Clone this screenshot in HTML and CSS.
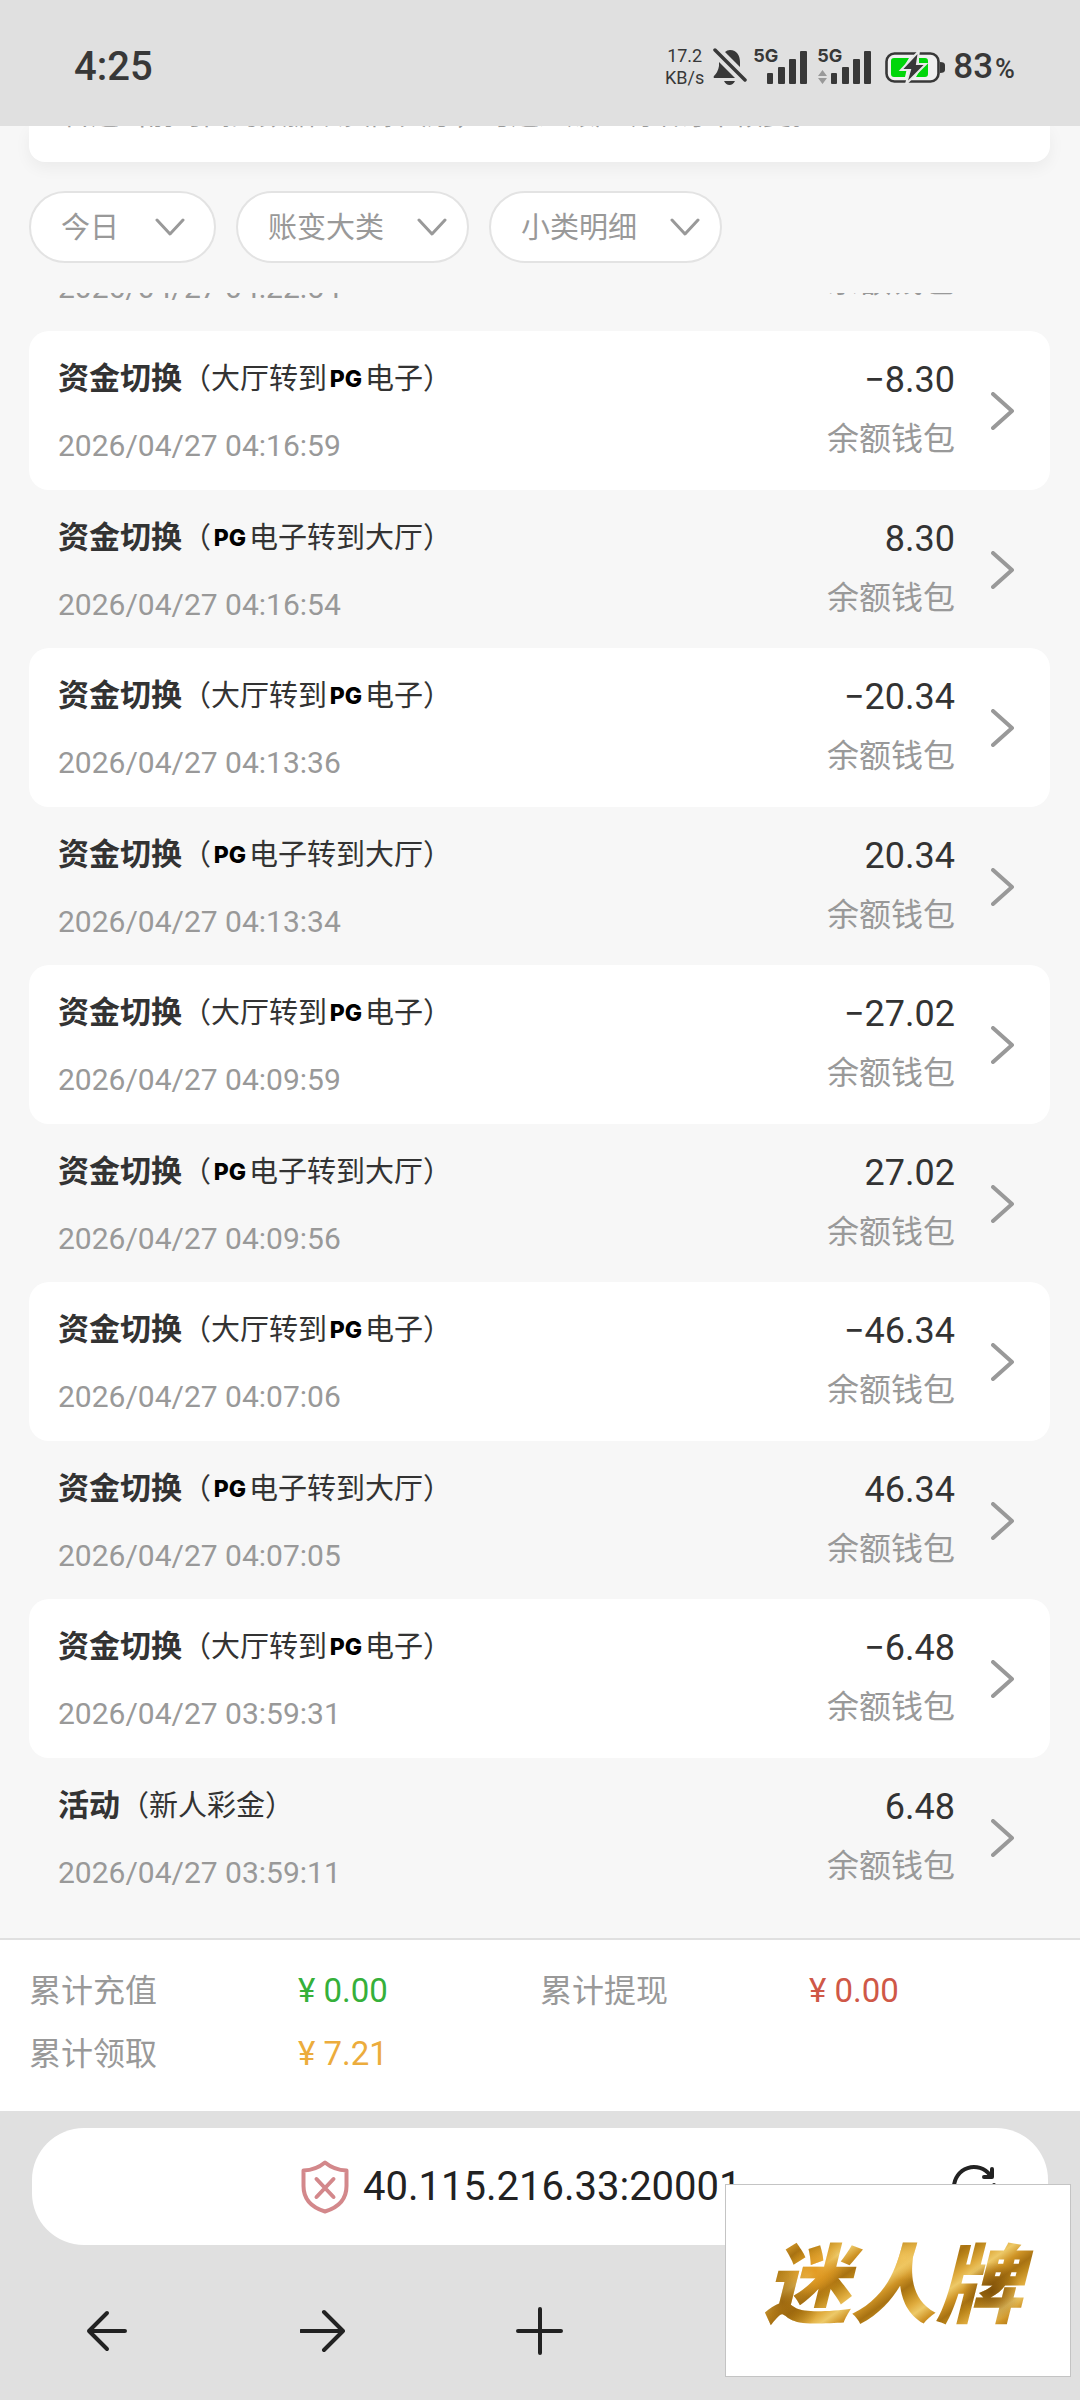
FILE: index.html
```html
<!DOCTYPE html>
<html lang="zh-CN">
<head>
<meta charset="utf-8">
<meta name="viewport" content="width=device-width, initial-scale=1">
<title>资金明细</title>
<link rel="stylesheet" href="styles.css">
</head>
<body>
<svg width="0" height="0" class="sprite" aria-hidden="true">
  <symbol id="chev-right" viewBox="0 0 24 38"><path d="M2 2L21 19L2 36" fill="none" stroke="currentColor" stroke-width="4" stroke-linecap="round" stroke-linejoin="round"/></symbol>
  <symbol id="chev-down" viewBox="0 0 30 20"><path d="M2 2L15 16L28 2" fill="none" stroke="currentColor" stroke-width="3" stroke-linecap="round" stroke-linejoin="round"/></symbol>
  <symbol id="bars" viewBox="0 0 54 36"><g fill="currentColor"><rect x="14" y="24" width="6" height="11" rx="1"/><rect x="25" y="18" width="7" height="17" rx="1"/><rect x="36" y="10" width="7" height="25" rx="1"/><rect x="47" y="2" width="7" height="33" rx="1"/></g></symbol>
</svg>
<div class="app">
  <header class="status">
    <time class="clock">4:25</time>
    <div class="indicators">
      <div class="net"><span>17.2</span><span>KB/s</span></div>
      <svg class="bell" viewBox="0 0 34 38" aria-hidden="true">
        <path d="M17 2C24 2 27 8 27 14V19L12 4Q14 2 17 2Z M6 14L22 30H1Q0 29 1 28Q5 24 6 18Z M11 33H22Q20 37 16.500 37Q13 37 11 33Z" fill="currentColor"/>
        <path d="M2 2L32 32" stroke="currentColor" stroke-width="3.500" stroke-linecap="round"/>
      </svg>
      <div class="signal"><span class="gen">5G</span><svg viewBox="0 0 54 36" aria-hidden="true"><use href="#bars"/></svg></div>
      <div class="signal"><span class="gen">5G</span><svg viewBox="0 0 54 36" aria-hidden="true"><use href="#bars"/><path d="M5.500 21L10 27H1Z M1 29H10L5.500 35Z" fill="#999"/></svg></div>
      <svg class="battery" viewBox="0 0 60 34" aria-hidden="true">
        <rect x="1.500" y="3.500" width="52" height="28" rx="8" fill="#f0f0f0" stroke="currentColor" stroke-width="2.600"/>
        <path d="M9 8H24L18 18H22L20 27H9Q6 27 6 24V11Q6 8 9 8Z M34 8H40Q43 8 43 11V24Q43 27 40 27H31L38 15H34Z" fill="#00d60a"/>
        <path d="M34 1L16 20H25L21 34L41 14H32Z" fill="currentColor" stroke="#e8e8e8" stroke-width="2"/>
        <path d="M55 12Q60 12 60 15V20Q60 23 55 23Z" fill="currentColor"/>
      </svg>
      <div class="level">83<span class="percent">%</span></div>
    </div>
  </header>

  <main class="page">
    <section class="notice"><p>普通当前时间的数据以实际大厅，可通过账户明细订单恢复。</p></section>

    <div class="filters">
      <button class="filter" type="button">今日<svg aria-hidden="true"><use href="#chev-down"/></svg></button>
      <button class="filter filter-wide" type="button">账变大类<svg aria-hidden="true"><use href="#chev-down"/></svg></button>
      <button class="filter filter-wide" type="button">小类明细<svg aria-hidden="true"><use href="#chev-down"/></svg></button>
    </div>

    <ul class="records">
      <li class="record"><div class="info"><time>2026/04/27 04:22:54</time></div><div class="sum"><span class="wallet">余额钱包</span></div><svg class="go" aria-hidden="true"></svg></li>
      <li class="record"><div class="info"><h2>资金切换<small>（大厅转到<b class="pg">PG</b>电子）</small></h2><time>2026/04/27 04:16:59</time></div><div class="sum"><span class="amount">−8.30</span><span class="wallet">余额钱包</span></div><svg class="go" aria-hidden="true"><use href="#chev-right"/></svg></li>
      <li class="record"><div class="info"><h2>资金切换<small>（<b class="pg">PG</b>电子转到大厅）</small></h2><time>2026/04/27 04:16:54</time></div><div class="sum"><span class="amount">8.30</span><span class="wallet">余额钱包</span></div><svg class="go" aria-hidden="true"><use href="#chev-right"/></svg></li>
      <li class="record"><div class="info"><h2>资金切换<small>（大厅转到<b class="pg">PG</b>电子）</small></h2><time>2026/04/27 04:13:36</time></div><div class="sum"><span class="amount">−20.34</span><span class="wallet">余额钱包</span></div><svg class="go" aria-hidden="true"><use href="#chev-right"/></svg></li>
      <li class="record"><div class="info"><h2>资金切换<small>（<b class="pg">PG</b>电子转到大厅）</small></h2><time>2026/04/27 04:13:34</time></div><div class="sum"><span class="amount">20.34</span><span class="wallet">余额钱包</span></div><svg class="go" aria-hidden="true"><use href="#chev-right"/></svg></li>
      <li class="record"><div class="info"><h2>资金切换<small>（大厅转到<b class="pg">PG</b>电子）</small></h2><time>2026/04/27 04:09:59</time></div><div class="sum"><span class="amount">−27.02</span><span class="wallet">余额钱包</span></div><svg class="go" aria-hidden="true"><use href="#chev-right"/></svg></li>
      <li class="record"><div class="info"><h2>资金切换<small>（<b class="pg">PG</b>电子转到大厅）</small></h2><time>2026/04/27 04:09:56</time></div><div class="sum"><span class="amount">27.02</span><span class="wallet">余额钱包</span></div><svg class="go" aria-hidden="true"><use href="#chev-right"/></svg></li>
      <li class="record"><div class="info"><h2>资金切换<small>（大厅转到<b class="pg">PG</b>电子）</small></h2><time>2026/04/27 04:07:06</time></div><div class="sum"><span class="amount">−46.34</span><span class="wallet">余额钱包</span></div><svg class="go" aria-hidden="true"><use href="#chev-right"/></svg></li>
      <li class="record"><div class="info"><h2>资金切换<small>（<b class="pg">PG</b>电子转到大厅）</small></h2><time>2026/04/27 04:07:05</time></div><div class="sum"><span class="amount">46.34</span><span class="wallet">余额钱包</span></div><svg class="go" aria-hidden="true"><use href="#chev-right"/></svg></li>
      <li class="record"><div class="info"><h2>资金切换<small>（大厅转到<b class="pg">PG</b>电子）</small></h2><time>2026/04/27 03:59:31</time></div><div class="sum"><span class="amount">−6.48</span><span class="wallet">余额钱包</span></div><svg class="go" aria-hidden="true"><use href="#chev-right"/></svg></li>
      <li class="record"><div class="info"><h2>活动<small>（新人彩金）</small></h2><time>2026/04/27 03:59:11</time></div><div class="sum"><span class="amount">6.48</span><span class="wallet">余额钱包</span></div><svg class="go" aria-hidden="true"><use href="#chev-right"/></svg></li>
    </ul>

    <dl class="totals">
      <div class="total"><dt>累计充值</dt><dd class="green">¥ 0.00</dd></div>
      <div class="total"><dt>累计提现</dt><dd class="red">¥ 0.00</dd></div>
      <div class="total"><dt>累计领取</dt><dd class="orange">¥ 7.21</dd></div>
    </dl>
  </main>

  <footer class="browser">
    <div class="address">
      <svg class="shield" viewBox="0 0 48 54" fill="none" stroke="#d3888b" stroke-width="4" stroke-linejoin="round" stroke-linecap="round" aria-hidden="true"><path d="M24 2.500Q33 10 45.500 10.500V26Q45.500 45 24 51.500Q2.500 45 2.500 26V10.500Q15 10 24 2.500Z"/><path d="M15.500 19L32.500 37M32.500 19L15.500 37"/></svg>
      <a class="url" href="#">40.115.216.33:20001</a>
      <button class="reload" type="button" aria-label="刷新"><svg viewBox="0 0 48 48" fill="none" stroke="currentColor" stroke-width="4" stroke-linecap="round" stroke-linejoin="round" aria-hidden="true"><path d="M4 24A20 20 0 0 1 40 12M42 6V14H34M44 22A20 20 0 0 1 8 36"/></svg></button>
    </div>
    <nav class="nav">
      <button type="button" aria-label="后退"><svg viewBox="0 0 48 48"><path d="M41 24H5M23 6L5 24L23 42"/></svg></button>
      <button type="button" aria-label="前进"><svg viewBox="0 0 48 48"><path d="M1 24H43M24 5L43 24L24 43"/></svg></button>
      <button type="button" aria-label="新建"><svg viewBox="0 0 48 48"><path d="M2 24H45M24 2V46"/></svg></button>
    </nav>
    <aside class="floating"><span>迷人牌</span></aside>
  </footer>
</div>
</body>
</html>
```
FILE: styles.css
```css
* { box-sizing: border-box; margin: 0; padding: 0; }

body {
  font-family: Roboto, "Noto Sans CJK SC", sans-serif;
  color: #333;
  background: #f7f7f7;
}

button {
  font: inherit;
  color: inherit;
  border: 0;
  background: none;
}

a { color: inherit; text-decoration: none; }

.sprite { position: absolute; }

.app {
  display: flex;
  flex-direction: column;
  height: 100vh;
}

/* status bar */
.status {
  display: flex;
  align-items: center;
  justify-content: space-between;
  padding: 42px 65px 34px 74px;
  line-height: 50px;
  background: #e0e0e0;
  position: relative;
  color: #383838;
}

.clock { font-size: 40px; font-weight: 500; }

.indicators { display: flex; align-items: center; }

.net {
  display: flex;
  flex-direction: column;
  align-items: center;
  margin-right: 9px;
  font-size: 18px;
  line-height: 22px;
}

.bell { width: 34px; height: 38px; margin-right: 6px; }
.signal { position: relative; width: 54px; height: 36px; margin-right: 10px; }
.signal svg { display: block; width: 54px; height: 36px; }

.gen {
  position: absolute;
  top: -5px;
  left: 0;
  font: 700 18px/24px Inter, sans-serif;
}

.battery { width: 60px; height: 34px; margin: 0 8px 0 4px; }

.level {
  display: flex;
  align-items: baseline;
  gap: 2px;
  height: 50px;
  font-size: 35px;
  font-weight: 500;
}

.percent { font-size: 27px; }

/* page */
.page {
  display: flex;
  flex-direction: column;
  flex: 1;
  min-height: 0;
}

.notice {
  display: flex;
  align-items: flex-end;
  height: 36px;
  margin: 0 30px 0 29px;
  padding: 0 34px 30px;
  background: #fff;
  border-radius: 0 0 16px 16px;
  box-shadow: 0 6px 16px rgba(0, 0, 0, 0.05);
  font-size: 28px;
  line-height: 32px;
  white-space: nowrap;
  color: #999;
}

.filters {
  display: flex;
  gap: 20px;
  padding: 29px 29px 30px;
}

.filter {
  display: flex;
  align-items: center;
  gap: 36px;
  padding: 15px 29px 13px 30px;
  border: 2px solid #e3e3e3;
  border-radius: 36px;
  background: #fff;
  font-size: 29px;
  line-height: 40px;
  color: #999;
}

.filter-wide { gap: 33px; padding-right: 20px; }

.filter svg { width: 30px; height: 20px; }

/* the list is scrolled to its end */
.records {
  display: flex;
  flex-direction: column;
  justify-content: flex-end;
  flex: 1;
  min-height: 0;
  overflow: hidden;
  padding: 0 30px 22px 29px;
  list-style: none;
}

.record {
  display: flex;
  flex-shrink: 0;
  padding: 24px 35px 23px 29px;
  border-radius: 20px;
}

.record:nth-child(even) {
  padding-bottom: 24px;
  background: #fff;
}

.info, .sum {
  display: flex;
  flex-direction: column;
  justify-content: flex-end;
}

.info { flex: 1; gap: 25px; }

.info h2 {
  display: flex;
  align-items: center;
  height: 44px;
  font-size: 31px;
  font-weight: 700;
  line-height: 44px;
}

.info small {
  display: flex;
  align-items: center;
  font-size: 29px;
  font-weight: 400;
}

.pg {
  width: 38px;
  font: 800 23px/44px Inter, sans-serif;
  text-align: center;
  color: #000;
}

.info time {
  height: 40px;
  font-size: 30px;
  line-height: 40px;
  color: #999;
}

.sum {
  gap: 17px;
  padding: 3px 0 7px;
  text-align: right;
}

.amount { height: 44px; font-size: 36px; line-height: 44px; }
.wallet { height: 40px; font-size: 32px; line-height: 40px; color: #999; }

.go {
  align-self: center;
  width: 24px;
  height: 38px;
  margin-left: 36px;
  color: #999;
}

/* totals */
.totals {
  display: grid;
  grid-template-columns: 1fr 1fr;
  row-gap: 19px;
  padding: 29px 29px 35px;
  border-top: 2px solid #e0e0e0;
  background: #fff;
  font-size: 32px;
  line-height: 44px;
}

.total { display: grid; grid-template-columns: 269px 1fr; height: 44px; }
.total dt { color: #999; }
.total dd { font-size: 33px; }
.green { color: #35b03a; }
.red { color: #cf5847; }
.orange { color: #ecac3c; }

/* browser bar */
.browser {
  position: relative;
  padding-top: 17px;
  background: #e0e0e0;
  color: #222;
}

.address {
  display: flex;
  align-items: center;
  margin: 0 32px;
  padding: 29px 50px 28px 269px;
  border-radius: 52px;
  background: #fff;
}

.shield { width: 48px; height: 54px; }

.url {
  flex: 1;
  margin-left: 14px;
  font-size: 40px;
  line-height: 60px;
}

.reload svg { display: block; width: 48px; height: 48px; }

.nav {
  display: grid;
  grid-template-columns: repeat(5, 1fr);
  padding: 38px 0 21px;
}

.nav button {
  display: flex;
  align-items: center;
  justify-content: center;
  height: 96px;
}

.nav svg {
  width: 48px;
  height: 48px;
  fill: none;
  stroke: currentColor;
  stroke-width: 4;
  stroke-linecap: round;
  stroke-linejoin: round;
}

.floating {
  position: absolute;
  right: 9px;
  bottom: 23px;
  display: flex;
  align-items: center;
  justify-content: center;
  width: 346px;
  height: 193px;
  border: 1px solid #c4c4c4;
  background: #fff;
}

.floating span {
  padding: 0 14px 4px 4px;
  font-family: "Noto Sans CJK SC", sans-serif;
  font-size: 86px;
  font-weight: 900;
  font-style: italic;
  line-height: 100px;
  color: transparent;
  background:
    radial-gradient(circle at 20% 40%, rgba(226, 150, 28, 0.9), transparent 12%),
    radial-gradient(circle at 52% 28%, rgba(240, 196, 92, 0.9), transparent 14%),
    radial-gradient(circle at 84% 60%, rgba(122, 76, 8, 0.9), transparent 12%),
    radial-gradient(circle at 8% 70%, rgba(150, 98, 12, 0.9), transparent 14%),
    repeating-linear-gradient(145deg, #b98318 0, #e0ac3e 12px, #edc968 20px, #cf9426 30px, #a87212 40px, #b98318 46px);
  -webkit-background-clip: text;
  background-clip: text;
}
```
